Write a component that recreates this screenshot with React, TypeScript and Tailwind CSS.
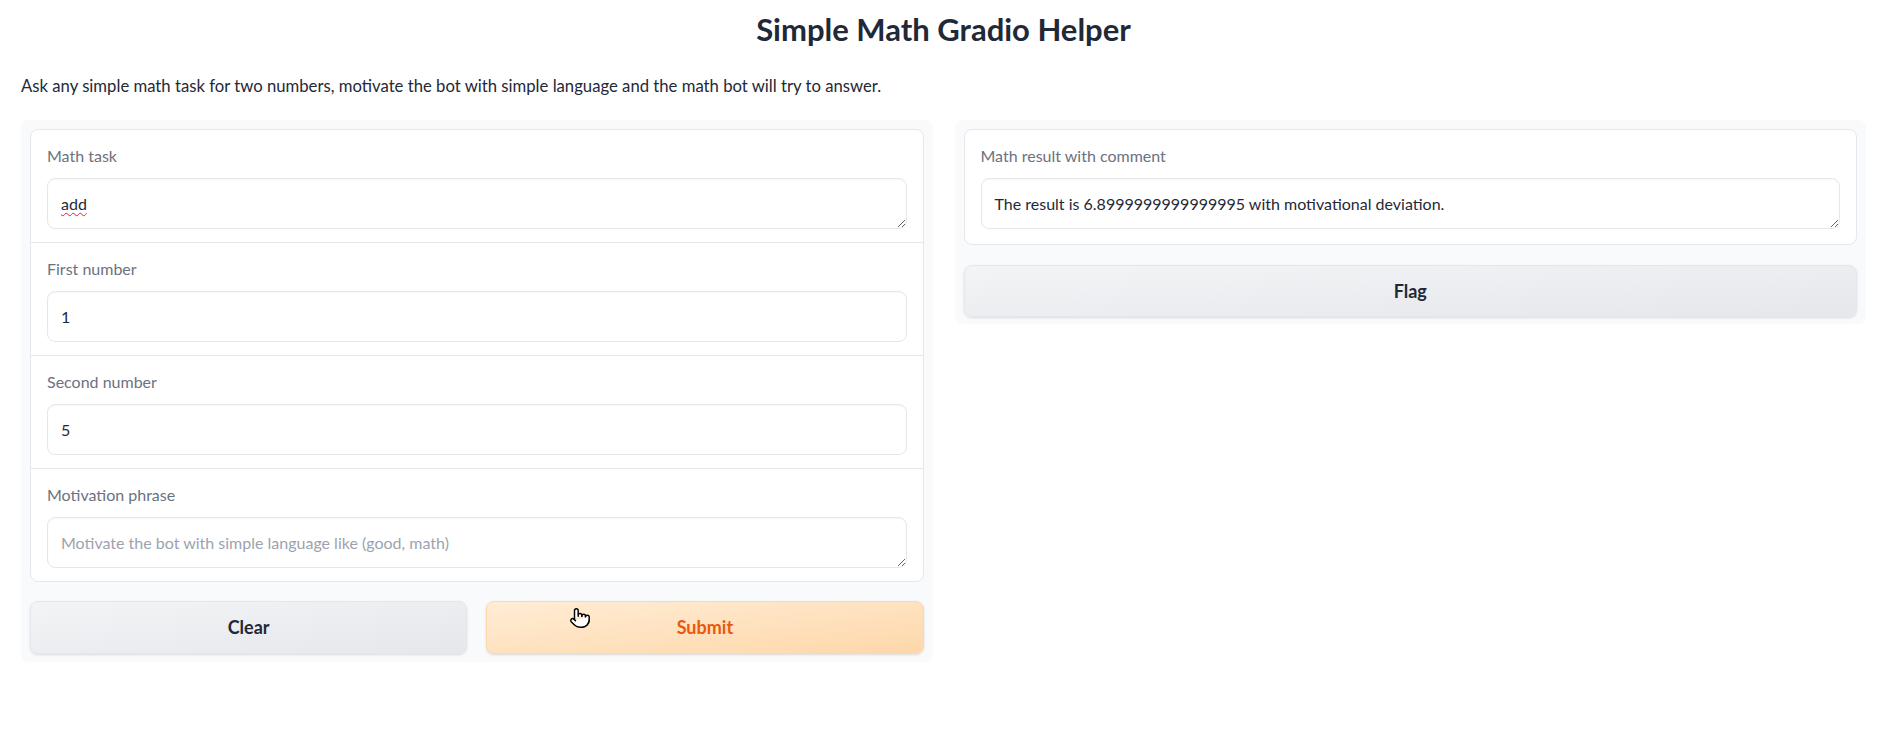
import { Pointer } from 'lucide-react';

interface FieldProps {
  label: string;
  value?: string;
  placeholder?: string;
  multiline?: boolean;
  squiggle?: boolean;
  tall?: boolean;
}

const Field = ({ label, value, placeholder, multiline, squiggle, tall }: FieldProps) => {
  const boxClass =
    'block w-full h-[51px] rounded-lg border border-[#e5e7eb] bg-white px-[13px] py-[14px] text-[16px] leading-[22px] text-[#1f2937] placeholder:text-[#9ca3af] shadow-[inset_0_1px_2px_rgba(0,0,0,0.04)] outline-none';

  return (
    <div className={`px-4 pt-[15px] ${tall ? 'pb-[15px]' : 'pb-[13px]'}`}>
      <div className="text-[16px] leading-[21px] text-[#6b7280]">{label}</div>
      <div className="relative mt-[12px]">
        {multiline ? (
          <textarea
            readOnly
            rows={1}
            defaultValue={value}
            placeholder={placeholder}
            className={`${boxClass} resize-y overflow-hidden`}
          />
        ) : (
          <input readOnly defaultValue={value} className={boxClass} />
        )}
        {/* spellcheck squiggle drawn over the word */}
        {squiggle && value && (
          <span className="pointer-events-none absolute left-[14px] top-[14px] text-[16px] leading-[22px] text-transparent underline decoration-wavy decoration-[#e11d48] decoration-1 underline-offset-[3px]">
            {value}
          </span>
        )}
      </div>
    </div>
  );
};

const App = () => {
  return (
    <div className="min-h-screen bg-white pl-[21px] pr-[12px] font-['Lato',sans-serif] text-[#1f2937]">
      <h1 className="pt-[10px] text-center text-[31px] font-bold leading-[38px]">
        Simple Math Gradio Helper
      </h1>
      <p className="mt-[26px] text-[16.7px] leading-[24px]">
        Ask any simple math task for two numbers, motivate the bot with simple language and the math bot will try to answer.
      </p>

      <div className="mt-[22px] flex items-start gap-[22px]">
        {/* Inputs */}
        <div className="flex-1 rounded-lg bg-[#f9fafb] p-[9px] pb-[8px]">
          <div className="divide-y divide-[#e5e7eb] rounded-lg border border-[#e5e7eb] bg-white">
            <Field label="Math task" value="add" multiline squiggle />
            <Field label="First number" value="1" />
            <Field label="Second number" value="5" />
            <Field
              label="Motivation phrase"
              placeholder="Motivate the bot with simple language like (good, math)"
              multiline
            />
          </div>
          <div className="mt-[19px] flex gap-[19px]">
            <button className="h-[53px] flex-1 rounded-lg border border-[#e5e7eb] bg-gradient-to-br from-[#f3f4f6] to-[#e5e7eb] text-[18px] font-bold text-[#1f2937] shadow-sm">
              Clear
            </button>
            <button className="relative h-[53px] flex-1 rounded-lg border border-[#fed7aa] bg-gradient-to-br from-[#ffedd5] to-[#fed7aa] text-[18px] font-bold text-[#ea580c] shadow-sm">
              Submit
              <Pointer
                size={22}
                strokeWidth={1.6}
                fill="white"
                color="black"
                className="absolute left-[82px] top-[5px]"
              />
            </button>
          </div>
        </div>

        {/* Output */}
        <div className="flex-1 rounded-lg bg-[#f9fafb] p-[9px] pb-[7px]">
          <div className="rounded-lg border border-[#e5e7eb] bg-white">
            <Field
              label="Math result with comment"
              value="The result is 6.8999999999999995 with motivational deviation."
              multiline
              tall
            />
          </div>
          <button className="mt-[20px] h-[52px] w-full rounded-lg border border-[#e5e7eb] bg-gradient-to-br from-[#f3f4f6] to-[#e5e7eb] text-[18px] font-bold text-[#1f2937] shadow-sm">
            Flag
          </button>
        </div>
      </div>
    </div>
  );
};

export default App;
